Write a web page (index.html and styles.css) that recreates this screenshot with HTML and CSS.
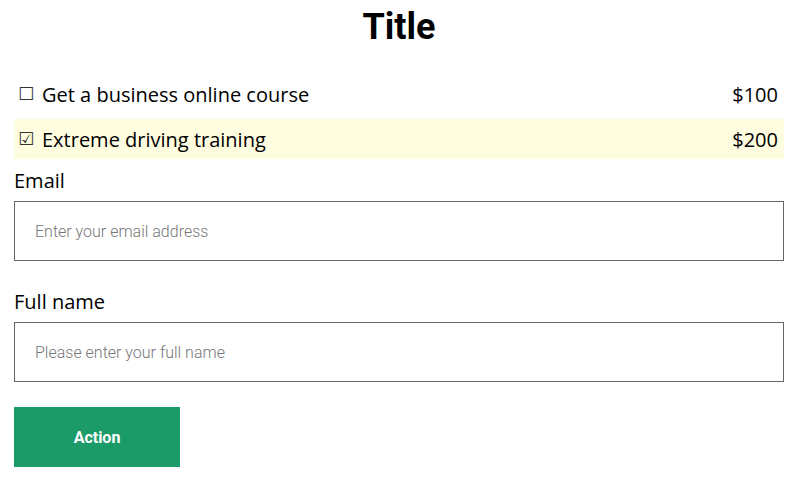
FILE: index.html
```html
<!DOCTYPE html>
<html lang="en">
<head>
  <meta charset="UTF-8" />
  <meta name="viewport" content="width=device-width, initial-scale=1.0" />
  <title>Title</title>
  <link rel="stylesheet" href="styles.css">
</head>
<body>
  <div class="page">
    <h1 class="title">Title</h1>

    <ul class="options">
      <li class="option">
        <span class="check">☐</span>
        <span class="option-name">Get a business online course</span>
        <span class="price">$100</span>
      </li>
      <li class="option selected">
        <span class="check">☑</span>
        <span class="option-name">Extreme driving training</span>
        <span class="price">$200</span>
      </li>
    </ul>

    <form class="form">
      <div class="field">
        <label for="email">Email</label>
        <input type="text" id="email" placeholder="Enter your email address" />
      </div>
      <div class="field">
        <label for="fullname">Full name</label>
        <input type="text" id="fullname" placeholder="Please enter your full name" />
      </div>
      <button type="button" class="action">Action</button>
    </form>
  </div>
</body>
</html>
```

FILE: styles.css
```css
body {
  margin: 0;
  font-family: "Open Sans", sans-serif;
  background: white;
  color: #000;
}
.page {
  padding: 6px 12px 0 14px;
}
.title {
  margin: 0;
  font-family: Roboto, sans-serif;
  font-size: 36px;
  font-weight: bold;
  text-align: center;
  line-height: 42px;
}
.options {
  list-style: none;
  margin: 26px 0 0;
  padding: 0;
}
.option {
  display: flex;
  align-items: center;
  height: 40px;
  padding: 0 6px 0 4px;
  margin-bottom: 5px;
  font-size: 20px;
}
.option.selected {
  background: #fffde0;
}
.check {
  font-family: "DejaVu Sans", sans-serif;
  font-size: 18px;
  line-height: 1;
  width: 24px;
  color: #333;
}
.option-name {
  flex: 1;
}
.form {
  margin-top: 8px;
}
.field {
  display: flex;
  flex-direction: column;
  margin-bottom: 25px;
}
.field + .field {
  margin-top: 27px;
}
.field label {
  font-size: 20px;
  line-height: 28px;
  margin-bottom: 6px;
}
.field input {
  height: 60px;
  box-sizing: border-box;
  border: 1px solid #666;
  padding: 0 20px;
  font-family: Roboto, sans-serif;
  font-size: 16px;
  font-weight: 300;
  outline: none;
}
.field input::placeholder {
  color: #777;
}
.action {
  width: 166px;
  height: 60px;
  border: none;
  background: #1a9b68;
  color: white;
  font-family: Roboto, sans-serif;
  font-size: 16px;
  font-weight: bold;
  cursor: pointer;
}
```
